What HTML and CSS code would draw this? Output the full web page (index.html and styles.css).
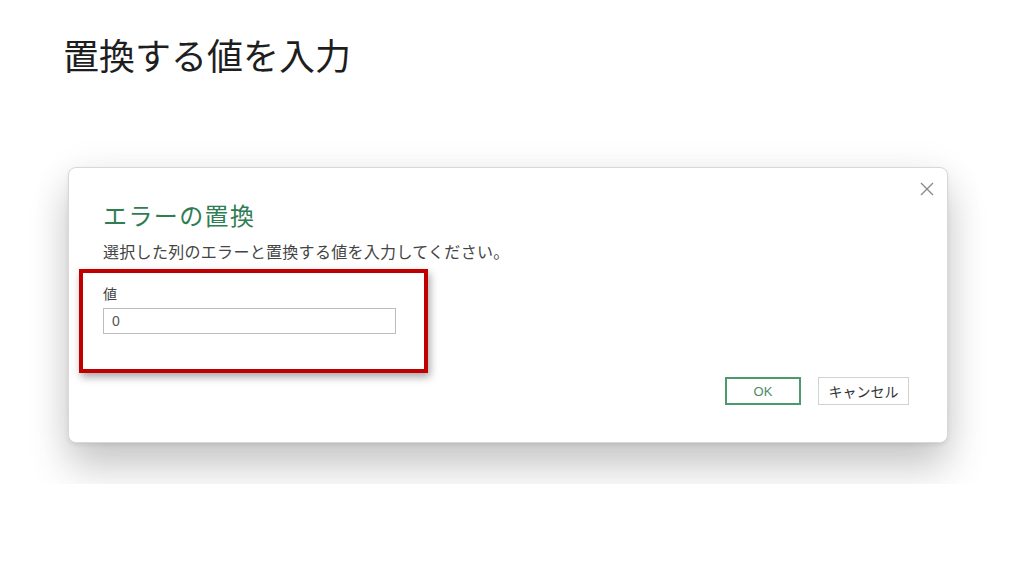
FILE: index.html
```html
<!DOCTYPE html>
<html lang="ja">
	<head>
		<meta charset="UTF-8">
		<title>置換する値を入力</title>
		<link rel="stylesheet" href="styles.css">
	</head>
	<body>
		<div class="slide">
			<h1 class="slide-title">置換する値を入力</h1>
			<div class="shot">
				<div class="dialog">
					<span class="close">
						<svg width="14" height="14" viewBox="0 0 14 14">
							<path d="M1 1 L13 13 M13 1 L1 13" stroke="#8a8a8a" stroke-width="1.4" fill="none"/>
						</svg>
					</span>
					<div class="dialog-title">エラーの置換</div>
					<div class="dialog-desc">選択した列のエラーと置換する値を入力してください。</div>
					<div class="field">
						<div class="field-label">値</div>
						<div class="field-input">0</div>
					</div>
					<div class="buttons">
						<div class="btn btn-ok">OK</div>
						<div class="btn btn-cancel">キャンセル</div>
					</div>
					<!-- annotation frame -->
					<div class="highlight"></div>
				</div>
			</div>
		</div>
	</body>
</html>
```

FILE: styles.css
```css
body {
	margin: 0;
	background-color: #ffffff;
	font-family: "Noto Sans CJK JP", "Noto Sans", sans-serif;
}
.slide {
	width: 1024px;
	height: 576px;
	overflow: hidden;
}
.slide-title {
	margin: 0;
	padding: 32px 0 0 63px;
	font-size: 36px;
	font-weight: normal;
	line-height: 44px;
	color: #1e1e1e;
}
.shot {
	margin: 54px 0 0 20px;
	width: 984px;
	height: 354px;
	overflow: hidden;
	background-color: #ffffff;
}
.dialog {
	position: relative;
	box-sizing: border-box;
	margin: 37px 0 0 48px;
	width: 880px;
	height: 276px;
	padding: 31px 38px 0 34px;
	background-color: #ffffff;
	border: 1px solid #d8d8d8;
	border-radius: 8px;
	box-shadow: 0px 26px 40px rgba(0, 0, 0, 0.19), 0px 4px 40px rgba(0, 0, 0, 0.07), 0px 2px 4px rgba(0, 0, 0, 0.08);
}
.close {
	position: absolute;
	top: 9px;
	right: 13px;
}
.dialog-title {
	font-size: 24px;
	letter-spacing: 1.4px;
	line-height: 32px;
	color: #2f7d52;
}
.dialog-desc {
	margin-top: 8px;
	font-size: 16px;
	letter-spacing: 0.3px;
	line-height: 24px;
	color: #444444;
}
.field {
	margin-top: 20px;
}
.field-label {
	font-size: 14px;
	line-height: 20px;
	color: #444444;
}
.field-input {
	box-sizing: border-box;
	margin-top: 5px;
	width: 293px;
	height: 26px;
	padding: 0 8px;
	border: 1px solid #bdbdbd;
	font-family: "Liberation Sans", sans-serif;
	font-size: 14px;
	line-height: 24px;
	color: #555555;
}
.buttons {
	display: flex;
	justify-content: flex-end;
	gap: 17px;
	margin-top: 43px;
}
.btn {
	box-sizing: border-box;
	height: 28px;
	display: flex;
	align-items: center;
	justify-content: center;
}
.btn-ok {
	width: 76px;
	border: 2px solid #4c9a6c;
	font-family: "Liberation Sans", sans-serif;
	font-size: 13px;
	color: #4c8a66;
}
.btn-cancel {
	width: 91px;
	border: 1px solid #d2d2d2;
	font-size: 14px;
	color: #333333;
}
.highlight {
	position: absolute;
	left: 10px;
	top: 101px;
	width: 349px;
	height: 104px;
	box-sizing: border-box;
	border: 4px solid #c00000;
	box-shadow: 2px 4px 8px rgba(0, 0, 0, 0.35);
}
```
